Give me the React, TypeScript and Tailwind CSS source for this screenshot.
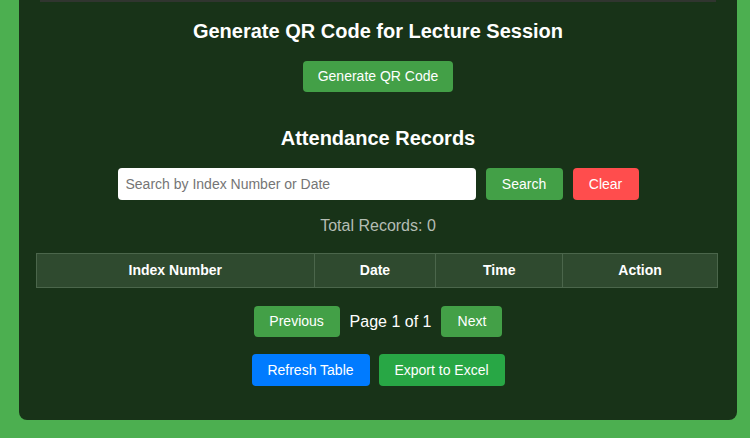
const COLUMNS = [
  { label: "Index Number", width: "w-[278px]" },
  { label: "Date", width: "w-[122px]" },
  { label: "Time", width: "w-[127px]" },
  { label: "Action", width: "w-[155px]" },
];

export default function App() {
  return (
    <div className="h-[438px] w-[750px] overflow-hidden bg-[#4caf50] px-[19px] font-['Liberation_Sans',Arial,sans-serif]">
      <div className="h-[420px] w-[718px] rounded-b-lg bg-[#183318] text-white">
        <div className="mx-[21px] h-[2px] bg-[#30352f]" />

        <h2 className="mt-[17px] text-center text-[20px] font-bold leading-6">
          Generate QR Code for Lecture Session
        </h2>
        <div className="mt-[18px] flex justify-center">
          <button className="h-[31px] w-[150px] rounded bg-[#43a047] text-[14px] text-white">
            Generate QR Code
          </button>
        </div>

        <h2 className="mt-[34px] text-center text-[20px] font-bold leading-6">Attendance Records</h2>
        <div className="mt-[18px] flex justify-center gap-[10px]">
          <input
            className="h-[32px] w-[358px] rounded bg-white px-2 text-[14px] text-gray-800 outline-none placeholder:text-[#757575]"
            placeholder="Search by Index Number or Date"
          />
          <button className="h-[32px] w-[77px] rounded bg-[#43a047] text-[14px] text-white">Search</button>
          <button className="h-[32px] w-[66px] rounded bg-[#ff4d4d] text-[14px] text-white">Clear</button>
        </div>

        <p className="mt-[17px] text-center text-[16px] leading-[18px] text-[#b4bdb4]">Total Records: 0</p>

        <table className="ml-[17px] mt-[18px] w-[682px] border-collapse">
          <thead>
            <tr className="bg-[#2f4a2f]">
              {COLUMNS.map((col) => (
                <th
                  key={col.label}
                  className={`${col.width} h-[34px] border border-[#4b664b] text-center text-[14px] font-bold`}
                >
                  {col.label}
                </th>
              ))}
            </tr>
          </thead>
        </table>

        <div className="mt-[18px] flex items-center justify-center gap-[10px]">
          <button className="h-[31px] w-[86px] rounded bg-[#43a047] text-[14px] text-white">Previous</button>
          <span className="text-[16px]">Page 1 of 1</span>
          <button className="h-[31px] w-[61px] rounded bg-[#43a047] text-[14px] text-white">Next</button>
        </div>

        <div className="mt-[17px] flex justify-center gap-[9px]">
          <button className="h-[32px] w-[118px] rounded bg-[#007bff] text-[14px] text-white">Refresh Table</button>
          <button className="h-[32px] w-[126px] rounded bg-[#28a745] text-[14px] text-white">Export to Excel</button>
        </div>
      </div>
    </div>
  );
}
